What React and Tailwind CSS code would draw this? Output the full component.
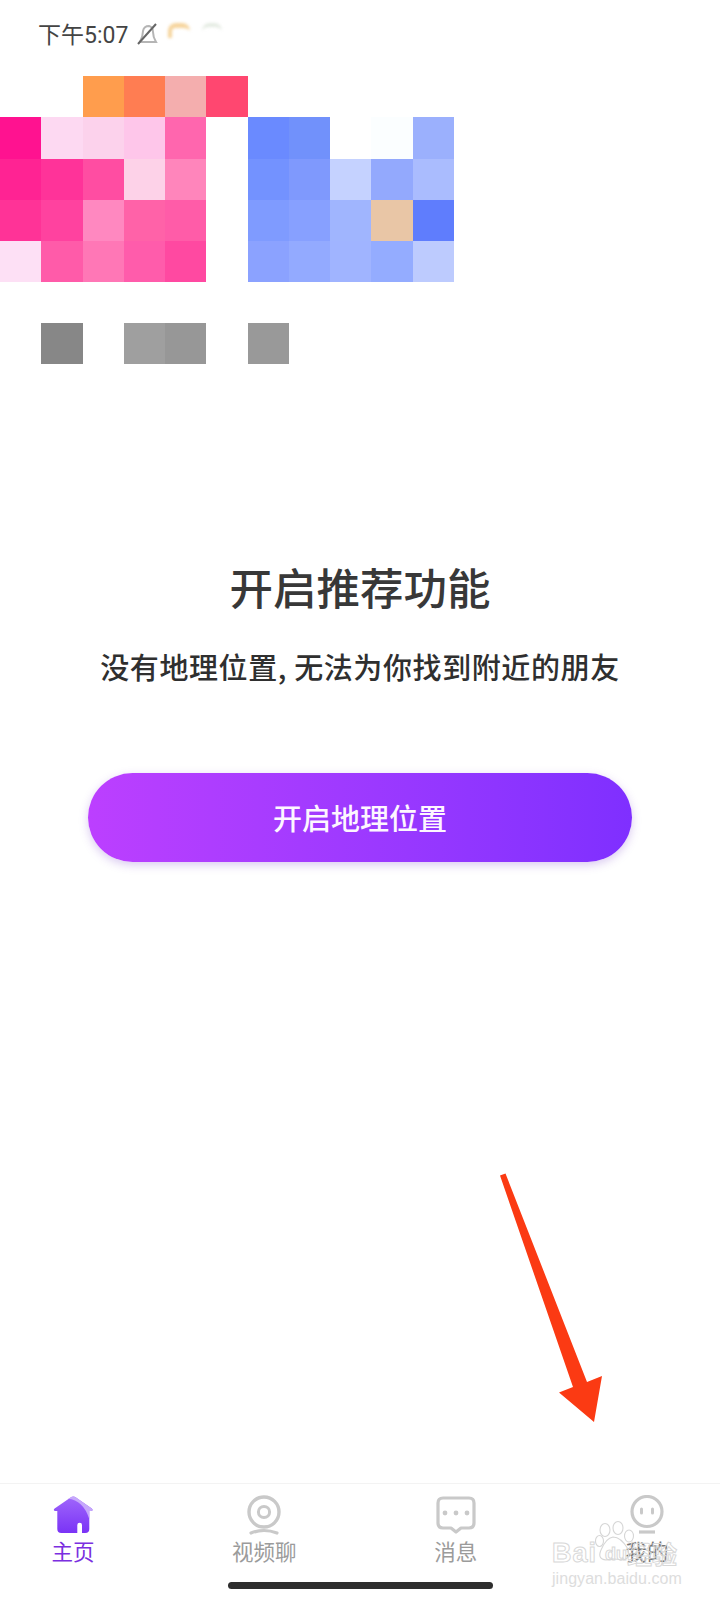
const cjk = "font-['Noto_Sans_CJK_SC',sans-serif]"

const mosaic = [
  ['', '', 'bg-[#ff9d4d]', 'bg-[#ff7d52]', 'bg-[#f4aeae]', 'bg-[#ff4770]', '', '', '', '', ''],
  ['bg-[#ff1290]', 'bg-[#fdd9f2]', 'bg-[#fcd2ec]', 'bg-[#fec6ea]', 'bg-[#ff66ae]', '', 'bg-[#6a8aff]', 'bg-[#7191fb]', '', 'bg-[#fbfeff]', 'bg-[#9bb0fd]'],
  ['bg-[#ff2393]', 'bg-[#ff3399]', 'bg-[#ff4da2]', 'bg-[#fdd2e8]', 'bg-[#ff85bb]', '', 'bg-[#7392ff]', 'bg-[#7f99fd]', 'bg-[#c5d2ff]', 'bg-[#93a9fd]', 'bg-[#aabcfe]'],
  ['bg-[#ff3397]', 'bg-[#ff429f]', 'bg-[#ff88c0]', 'bg-[#ff62a8]', 'bg-[#ff5ca8]', '', 'bg-[#7f9bff]', 'bg-[#87a0ff]', 'bg-[#a0b5fe]', 'bg-[#e9c6a6]', 'bg-[#5f7dfd]'],
  ['bg-[#fde0f5]', 'bg-[#ff5ba9]', 'bg-[#ff77b6]', 'bg-[#ff5cab]', 'bg-[#ff49a1]', '', 'bg-[#8ba2ff]', 'bg-[#93aaff]', 'bg-[#a0b4ff]', 'bg-[#94acff]', 'bg-[#bdcbfe]'],
]

const greys = ['', 'bg-[#878787]', '', 'bg-[#9f9f9f]', 'bg-[#979797]', '', 'bg-[#999999]']

function HomeIcon() {
  return (
    <svg width="40" height="40" viewBox="0 0 40 40">
      <defs>
        <linearGradient id="homeFill" x1="0" y1="0" x2="0" y2="1">
          <stop offset="0" stopColor="#a067fb" />
          <stop offset="1" stopColor="#7a33f6" />
        </linearGradient>
      </defs>
      <path
        d="M17.6 2.4 Q20.3 0.4 23 2.4 L38.8 13.6 Q40.8 15.6 37.8 16 L36.3 16 L36.3 34 Q36.3 38 32.3 38 L29 38 L29 30 Q29 27.7 26.7 27.7 Q24.3 27.7 24.3 30 L24.3 38 L8.3 38 Q4.3 38 4.3 34 L4.3 16 L2.6 16 Q-0.4 15.6 1.6 13.6 Z"
        fill="url(#homeFill)"
      />
      <path
        d="M15 3.8 L17.6 2.4 Q20.3 0.4 23 2.4 L38.8 13.6 Q40.8 15.6 37.8 16 L36.3 16 L36.3 24 Q30 5 15 3.8 Z"
        fill="#c6a8fb"
      />
    </svg>
  )
}

function VideoIcon() {
  return (
    <svg width="40" height="40" viewBox="0 0 40 40" fill="none" stroke="#c9c9c9">
      <circle cx="20" cy="17" r="15" strokeWidth="3.4" />
      <circle cx="20" cy="17" r="5.6" strokeWidth="3" />
      <path d="M7 38 Q20 33 33 38" strokeWidth="3.2" strokeLinecap="round" />
    </svg>
  )
}

function MessageIcon() {
  return (
    <svg width="40" height="40" viewBox="0 0 40 40" fill="none">
      <path
        d="M7 3 H33 Q38 3 38 8 V28 Q38 33 33 33 H25 L20 37 L15 33 H7 Q2 33 2 28 V8 Q2 3 7 3 Z"
        stroke="#c9c9c9"
        strokeWidth="3.2"
        strokeLinejoin="round"
      />
      <circle cx="9" cy="18" r="2.4" fill="#c9c9c9" />
      <circle cx="20" cy="18" r="2.4" fill="#c9c9c9" />
      <circle cx="31" cy="18" r="2.4" fill="#c9c9c9" />
    </svg>
  )
}

function MeIcon() {
  return (
    <svg width="40" height="40" viewBox="0 0 40 40" fill="none" stroke="#c9c9c9">
      <circle cx="20" cy="16.5" r="15" strokeWidth="3.2" />
      <path d="M14.5 14 V18 M25.5 14 V18" strokeWidth="3" strokeLinecap="round" />
      <path d="M12 37 H28" strokeWidth="3.2" />
    </svg>
  )
}

const tabs = [
  { label: '主页', icon: <HomeIcon />, color: 'text-[#7b2fe0]' },
  { label: '视频聊', icon: <VideoIcon />, color: 'text-[#9b9b9b]' },
  { label: '消息', icon: <MessageIcon />, color: 'text-[#9b9b9b]' },
  { label: '我的', icon: <MeIcon />, color: 'text-[#777777]' },
]

function StatusBar() {
  return (
    <div className="flex h-[76px] items-start pl-[38px] pt-[23px]">
      <span className="font-['Roboto','Noto_Sans_CJK_SC',sans-serif] text-[23px] leading-[26px] text-[#444444]">下午5:07</span>
      <svg className="ml-[7px] mt-[-1px] blur-[0.6px]" width="24" height="24" viewBox="0 0 24 24" fill="none">
        <path d="M5 20 Q8 14 8 9 Q9 4 14 4 Q18 5 18 10 Q18 15 21 20 Z" stroke="#b5b5b5" strokeWidth="2" />
        <path d="M3 22 L21 2" stroke="#666666" strokeWidth="2" />
      </svg>
      <div className="ml-[9px] h-[15px] w-[22px] rounded-t-[8px] border-l-[4px] border-t-[5px] border-[#f6d49c] blur-[1.5px]" />
      <div className="ml-[12px] h-[12px] w-[20px] rounded-t-[8px] border-t-[4px] border-[#e4ebe2] blur-[1.5px]" />
    </div>
  )
}

function Mosaic() {
  return (
    <div className="grid w-[453.75px] grid-cols-[repeat(11,41.25px)] auto-rows-[41.25px]">
      {mosaic.flat().map((color, index) => (
        <div key={index} className={color} />
      ))}
    </div>
  )
}

function BaiduMark() {
  const outline = "text-transparent [-webkit-text-stroke:1px_#d8d8d8]"
  return (
    <div className="pointer-events-none absolute left-[552px] top-[1520px] h-[66px] w-[132px]">
      <span className={`absolute left-0 top-[18px] font-['Liberation_Sans',sans-serif] text-[27px] font-bold leading-[30px] tracking-[1px] ${outline}`}>Bai</span>
      <svg className="absolute left-[43px] top-0" width="42" height="42" viewBox="0 0 42 42" fill="none" stroke="#d6d6d6" strokeWidth="1.1">
        <ellipse cx="10" cy="10" rx="5" ry="6.5" />
        <ellipse cx="23" cy="8" rx="5" ry="6.5" />
        <ellipse cx="34" cy="16" rx="4.5" ry="6" />
        <ellipse cx="4.5" cy="21" rx="4" ry="5.5" />
        <path d="M18 17 Q26 17 33 29 Q36 40 26 40 Q19 38 11 40 Q2 39 6 30 Q11 18 18 17 Z" />
      </svg>
      <span className={`absolute left-[53px] top-[22px] font-['Liberation_Sans',sans-serif] text-[18px] font-bold leading-[24px] ${outline}`}>du</span>
      <span className={`absolute left-[75px] top-[19px] ${cjk} text-[25px] font-bold leading-[28px] ${outline}`}>经验</span>
      <span className="absolute left-0 top-[50px] whitespace-nowrap font-['Liberation_Sans',sans-serif] text-[16px] leading-[18px] tracking-[0.05px] text-[#dddddd]">jingyan.baidu.com</span>
    </div>
  )
}

function Arrow() {
  return (
    <svg className="absolute left-[480px] top-[1150px]" width="140" height="290" viewBox="0 0 140 290">
      <path d="M20 25.5 L25.5 23.5 L107 232 L122 226 L114 272 L79 242.5 L93 237 Z" fill="#fb3a13" />
    </svg>
  )
}

export default function App() {
  return (
    <div className={`relative flex h-[1600px] w-[720px] flex-col overflow-hidden bg-white ${cjk}`}>
      <StatusBar />
      <Mosaic />
      <div className="mt-[41px] grid w-[453.75px] grid-cols-[repeat(11,41.25px)] auto-rows-[41px]">
        {greys.map((color, index) => (
          <div key={index} className={color} />
        ))}
      </div>

      <h1 className="mt-[193px] text-center text-[43.5px] font-medium leading-[60px] text-[#383838]">开启推荐功能</h1>
      <p className="mt-[29px] text-center text-[29px] font-medium leading-[40px] tracking-[0.6px] text-[#2f2f2f]">没有地理位置, 无法为你找到附近的朋友</p>
      <button className="mx-[88px] mt-[87px] h-[89px] rounded-full bg-gradient-to-r from-[#bc3fff] to-[#7f2fff] text-[29px] font-medium text-[#fdf6ff] shadow-[0_3px_10px_rgba(120,60,200,0.28)]">
        开启地理位置
      </button>

      <div className="flex-1" />

      <nav className="flex h-[117px] flex-col border-t border-[#f3f3f3] pt-[11px]">
        <div className="flex justify-between px-[13px]">
          {tabs.map((tab) => (
            <div key={tab.label} className="flex w-[120px] flex-col items-center">
              {tab.icon}
              <span className={`mt-[2px] text-[21.5px] leading-[28px] ${tab.color}`}>{tab.label}</span>
            </div>
          ))}
        </div>
        <div className="mx-auto mt-[17px] h-[7px] w-[265px] rounded-full bg-[#2e2e2e]" />
      </nav>

      <Arrow />
      <BaiduMark />
    </div>
  )
}
